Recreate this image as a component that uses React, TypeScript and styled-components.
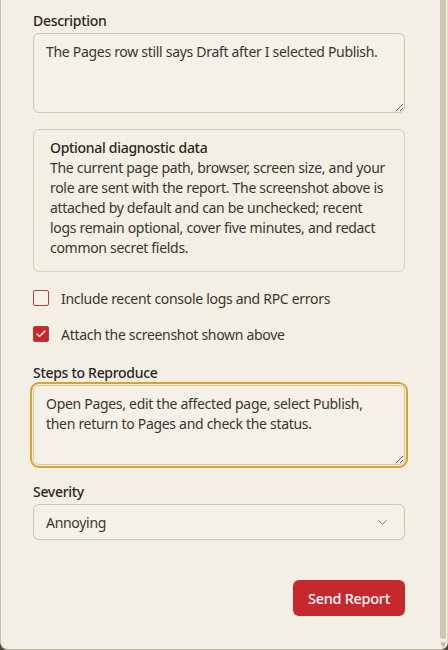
import { useState } from 'react';
import styled, { createGlobalStyle } from 'styled-components';
import { Check, ChevronDown } from 'lucide-react';

const GlobalStyle = createGlobalStyle`
  html, body {
    margin: 0;
    padding: 0;
    background: #4a4740;
  }
  body {
    font-family: "Noto Sans", "DejaVu Sans", sans-serif;
    letter-spacing: -0.3px;
    color: #2b2722;
  }
  * { box-sizing: border-box; }
`;

const Panel = styled.div`
  width: 448px;
  height: 650px;
  display: flex;
  background: #f3efe4;
  border-left: 1px solid #c4bdaa;
  border-bottom: 1px solid #c4bdaa;
  border-right: 1px solid #e6dbbd;
  border-radius: 0 0 8px 8px;
  overflow: hidden;
`;

const Content = styled.div`
  flex: 1;
  display: flex;
  flex-direction: column;
  gap: 16px;
  padding: 11px 34px 0 32px;
`;

const ScrollTrack = styled.div`
  width: 8px;
  display: flex;
  flex-direction: column;
  align-items: center;
  padding: 0 1px;
  background: #f1ecdf;
`;

const ScrollThumb = styled.div`
  flex: 1;
  width: 6px;
  margin-bottom: 2px;
  border-radius: 0 0 3px 3px;
  background: #cdc7b3;
`;

const ScrollArrow = styled.div`
  height: 8px;
  display: flex;
  align-items: flex-start;
  justify-content: center;
  color: #bfb9a6;
  font-size: 7px;
  line-height: 7px;
`;

const Field = styled.div<{ $extra?: number }>`
  display: flex;
  flex-direction: column;
  gap: 2px;
  margin-top: ${(p) => p.$extra || 0}px;
`;

const Label = styled.label`
  font-size: 14px;
  line-height: 20px;
  font-weight: 500;
  color: #2b2722;
`;

const TextArea = styled.textarea<{ $active?: boolean }>`
  width: 100%;
  height: 80px;
  resize: vertical;
  padding: 8px 12px;
  font-family: inherit;
  font-size: 14px;
  line-height: 20px;
  letter-spacing: -0.3px;
  color: #3a362f;
  background: #f5f1e8;
  border: 1px solid ${(p) => (p.$active ? '#e2c785' : '#cdc6b3')};
  border-radius: 6px;
  outline: ${(p) => (p.$active ? '2px solid #d3a43a' : 'none')};
  outline-offset: 1px;
`;

const InfoBox = styled.div`
  border: 1px solid #d6d0bf;
  border-radius: 6px;
  padding: 8px 16px 13px 16px;
  font-size: 14px;
  line-height: 20px;
  color: #3a362f;
`;

const InfoTitle = styled.div`
  font-weight: 500;
  color: #2b2722;
`;

const CheckList = styled.div`
  display: flex;
  flex-direction: column;
  gap: 16px;
`;

const CheckRow = styled.label`
  display: flex;
  align-items: center;
  gap: 12px;
  height: 20px;
  font-size: 14px;
  color: #3a362f;
  cursor: pointer;
`;

const Box = styled.span<{ $checked: boolean }>`
  width: 16px;
  height: 16px;
  display: flex;
  align-items: center;
  justify-content: center;
  border-radius: 2px;
  border: 1px solid #c4393a;
  background: ${(p) => (p.$checked ? '#c4292f' : '#f5f1e8')};
  color: #fff;
`;

const SelectBox = styled.button`
  width: 100%;
  height: 36px;
  display: flex;
  align-items: center;
  justify-content: space-between;
  padding: 0 14px 0 12px;
  font-family: inherit;
  font-size: 14px;
  letter-spacing: -0.3px;
  color: #3a362f;
  background: #f5f1e8;
  border: 1px solid #cdc6b3;
  border-radius: 6px;
  box-shadow: 0 1px 1px rgba(0, 0, 0, 0.04);
`;

const Actions = styled.div`
  display: flex;
  justify-content: flex-end;
  margin-top: 24px;
`;

const SendButton = styled.button`
  width: 112px;
  height: 36px;
  padding: 0;
  font-family: inherit;
  font-size: 14.5px;
  font-weight: 500;
  letter-spacing: -0.3px;
  color: #fff;
  background: #c6282e;
  border: none;
  border-radius: 6px;
`;

const Checkbox = ({ label, checked, onToggle }: { label: string; checked: boolean; onToggle: () => void }) => (
  <CheckRow onClick={onToggle}>
    <Box $checked={checked}>{checked && <Check size={12} strokeWidth={2.5} />}</Box>
    {label}
  </CheckRow>
);

const App = () => {
  const [logs, setLogs] = useState(false);
  const [shot, setShot] = useState(true);

  return (
    <>
      <GlobalStyle />
      <Panel>
        <Content>
          <Field>
            <Label>Description</Label>
            <TextArea defaultValue="The Pages row still says Draft after I selected Publish." />
          </Field>

          <InfoBox>
            <InfoTitle>Optional diagnostic data</InfoTitle>
            The current page path, browser, screen size, and your role are sent with the report. The
            screenshot above is attached by default and can be unchecked; recent logs remain optional,
            cover five minutes, and redact common secret fields.
          </InfoBox>

          <CheckList>
            <Checkbox label="Include recent console logs and RPC errors" checked={logs} onToggle={() => setLogs(!logs)} />
            <Checkbox label="Attach the screenshot shown above" checked={shot} onToggle={() => setShot(!shot)} />
          </CheckList>

          <Field $extra={3}>
            <Label>Steps to Reproduce</Label>
            <TextArea
              $active
              defaultValue={'Open Pages, edit the affected page, select Publish, then return to Pages and check the status.'}
            />
          </Field>

          <Field $extra={1}>
            <Label>Severity</Label>
            <SelectBox type="button">
              Annoying
              <ChevronDown size={15} strokeWidth={1.5} color="#77715f" />
            </SelectBox>
          </Field>

          <Actions>
            <SendButton type="button">Send Report</SendButton>
          </Actions>
        </Content>
        <ScrollTrack>
          <ScrollThumb />
          <ScrollArrow>▼</ScrollArrow>
        </ScrollTrack>
      </Panel>
    </>
  );
};

export default App;
